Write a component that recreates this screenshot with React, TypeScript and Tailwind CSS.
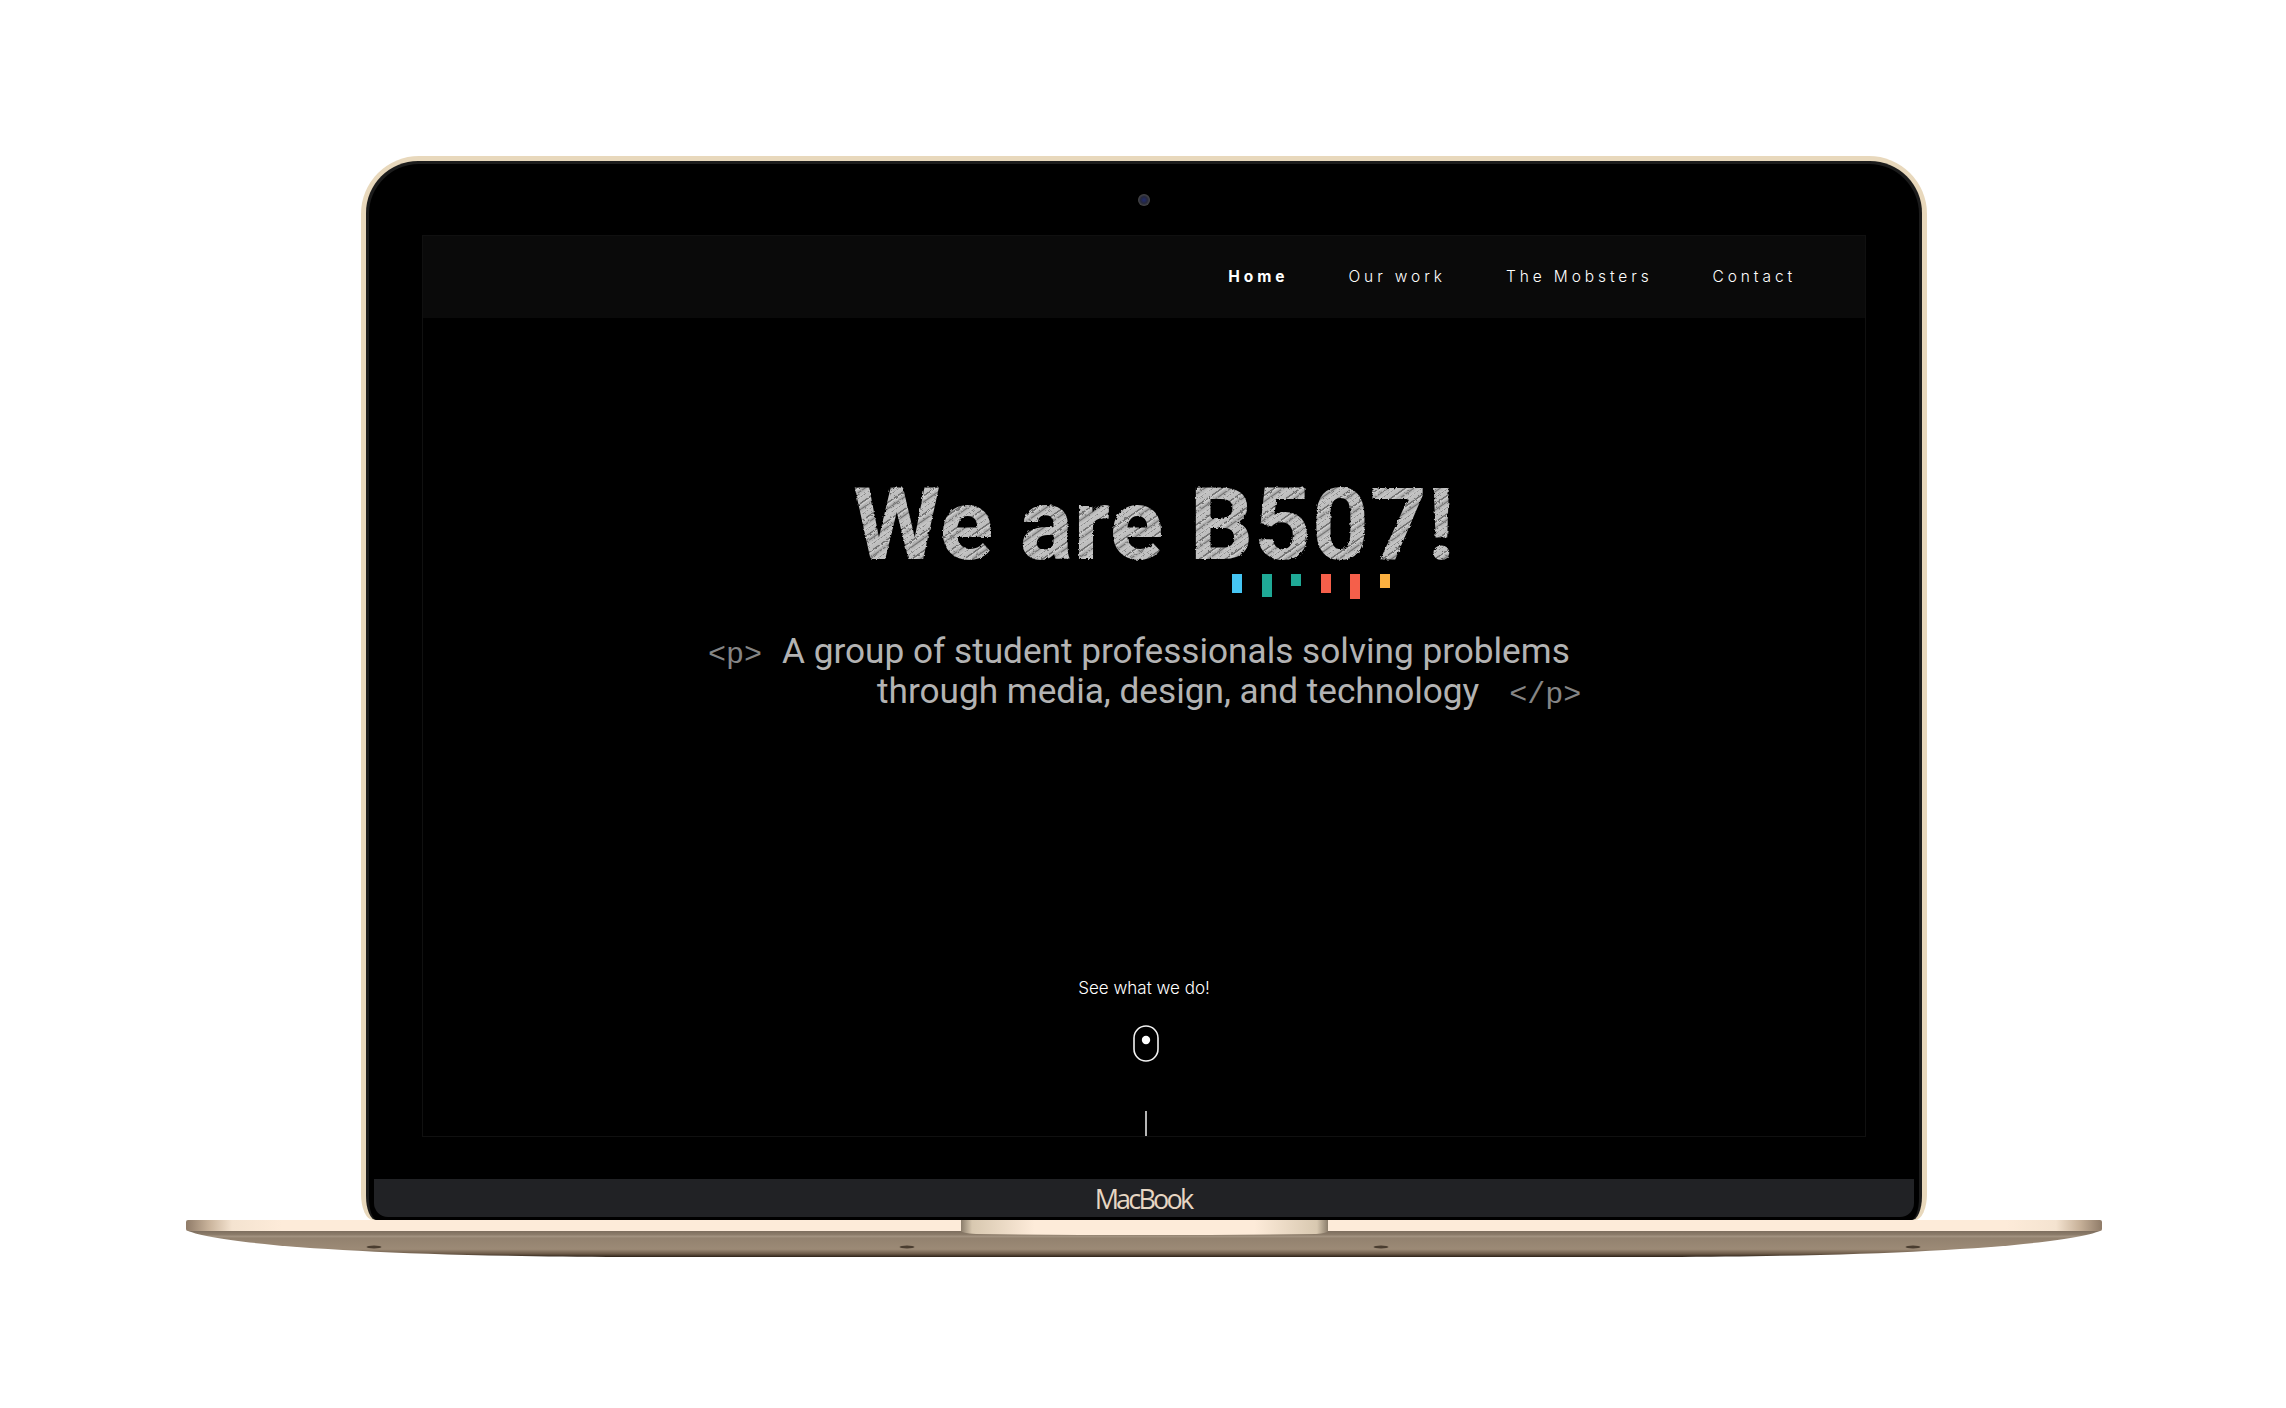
const navItems = [
  { label: 'Home', active: true },
  { label: 'Our work', active: false },
  { label: 'The Mobsters', active: false },
  { label: 'Contact', active: false },
];

const bars = [
  { h: 'h-[19px]', color: 'bg-[#45c5f3]' },
  { h: 'h-[23px]', color: 'bg-[#1fa996]' },
  { h: 'h-[12px]', color: 'bg-[#1fa996]' },
  { h: 'h-[19px]', color: 'bg-[#f55f4a]' },
  { h: 'h-[25px]', color: 'bg-[#f55f4a]' },
  { h: 'h-[14px]', color: 'bg-[#fbb040]' },
];

const ScrollMouse = () => (
  <svg width="26" height="37" viewBox="0 0 26 37" fill="none">
    <rect x="1" y="1" width="24" height="35" rx="12" stroke="#f2f2f2" strokeWidth="1.6" />
    <circle cx="13" cy="15" r="4.2" fill="#ffffff" />
  </svg>
);

// base of the laptop: front lip, notch, tapered body and rubber feet
const LaptopBase = () => (
  <svg width="1916" height="38" viewBox="0 0 1916 38" className="block ml-[186px]">
    <defs>
      {/* roughens the headline so it reads as scribbled */}
      <filter id="chalk" x="-2%" y="-5%" width="104%" height="110%">
        <feTurbulence type="fractalNoise" baseFrequency="0.35" numOctaves="2" seed="4" result="noise" />
        <feDisplacementMap in="SourceGraphic" in2="noise" scale="3" />
      </filter>
      <linearGradient id="lip" x1="0" x2="1" y1="0" y2="0">
        <stop offset="0" stopColor="#8f7b68" />
        <stop offset="0.012" stopColor="#c9b39b" />
        <stop offset="0.024" stopColor="#f4e3d0" />
        <stop offset="0.05" stopColor="#fdebd9" />
        <stop offset="0.95" stopColor="#fdebd9" />
        <stop offset="0.976" stopColor="#f4e3d0" />
        <stop offset="0.988" stopColor="#c9b39b" />
        <stop offset="1" stopColor="#8f7b68" />
      </linearGradient>
      <linearGradient id="body" x1="0" x2="0" y1="0" y2="1">
        <stop offset="0" stopColor="#7d6e5e" />
        <stop offset="0.15" stopColor="#8d7d6b" />
        <stop offset="0.2" stopColor="#a49482" />
        <stop offset="0.28" stopColor="#93826f" />
        <stop offset="0.7" stopColor="#9c8a76" />
        <stop offset="0.88" stopColor="#6b5947" />
        <stop offset="1" stopColor="#2c2117" />
      </linearGradient>
      <linearGradient id="notch" x1="0" x2="1" y1="0" y2="0">
        <stop offset="0" stopColor="#8b7d6b" />
        <stop offset="0.03" stopColor="#d8c8b0" />
        <stop offset="0.2" stopColor="#fdebd9" />
        <stop offset="0.8" stopColor="#fdebd9" />
        <stop offset="0.97" stopColor="#d8c8b0" />
        <stop offset="1" stopColor="#8b7d6b" />
      </linearGradient>
    </defs>
    <path d="M2 11 L1914 11 C1880 24 1740 36 1480 37 L436 37 C176 36 36 24 2 11 Z" fill="url(#body)" />
    <path d="M0 2 Q0 0 2 0 L1914 0 Q1916 0 1916 2 L1916 9 Q1916 11 1914 11 L2 11 Q0 11 0 9 Z" fill="url(#lip)" />
    <path d="M775 0 L1142 0 L1142 11 Q1142 13 1130 14 Q960 16 790 14 Q775 13 775 11 Z" fill="url(#notch)" />
    <ellipse cx="188" cy="27" rx="7.5" ry="1.4" fill="#4a3d30" />
    <ellipse cx="721" cy="27" rx="7.5" ry="1.4" fill="#4a3d30" />
    <ellipse cx="1195" cy="27" rx="7.5" ry="1.4" fill="#4a3d30" />
    <ellipse cx="1727" cy="27" rx="7.5" ry="1.4" fill="#4a3d30" />
  </svg>
);

export default function App() {
  return (
    <div className="w-full h-[1408px] bg-white pt-[156px] overflow-hidden font-['Roboto',sans-serif]">
      {/* Lid */}
      <div className="ml-[361px] w-[1566px] h-[1064px] bg-[#e8d8bc] px-[5px] pt-[5px] rounded-t-[58px] rounded-b-[12px_26px]">
        <div className="h-full bg-[#1c1c1c] px-[3px] pt-[3px] rounded-t-[52px] rounded-b-[10px_24px]">
          <div className="h-full bg-black rounded-t-[50px] rounded-b-[8px_22px] flex flex-col overflow-hidden">
            {/* Camera */}
            <div className="h-[71px] shrink-0 flex justify-center pt-[30px]">
              <div className="w-[12px] h-[12px] rounded-full bg-[radial-gradient(circle,#1f2a70_0%,#26283a_40%,#474747_70%,#1c1c1c_100%)]" />
            </div>
            {/* Screen */}
            <div className="mx-[53px] h-[902px] shrink-0 border border-[#101010] flex flex-col">
              <nav className="h-[82px] shrink-0 bg-[#0a0a0a] flex items-center justify-end pr-[69px] gap-[60px]">
                {navItems.map((item) => (
                  <a
                    key={item.label}
                    className={`text-[15.5px] tracking-[3.9px] text-white font-['Inter',sans-serif] ${
                      item.active ? 'font-bold' : 'font-light'
                    }`}
                  >
                    {item.label}
                  </a>
                ))}
              </nav>
              <main className="flex-1 flex flex-col items-center relative">
                <h1 className="mt-[148px] ml-[20px] h-[118px] leading-[118px] text-[100px] tracking-[0.5px] font-bold whitespace-nowrap font-['Roboto',sans-serif] [filter:url(#chalk)] bg-[repeating-linear-gradient(145deg,#c4c4c4_0px,#bcbcbc_4px,#6a6a6a_4.5px,#7c7c7c_5.5px,#d2d2d2_6px,#a8a8a8_9px,#707070_10px,#b4b4b4_11px,#cacaca_14px,#808080_15px)] bg-clip-text text-transparent">
                  We are B507!
                </h1>
                <div className="flex gap-[19.5px] items-start h-[25px] mt-[-10px] ml-[334px]">
                  {bars.map((bar, i) => (
                    <span key={i} className={`w-[10px] ${bar.h} ${bar.color}`} />
                  ))}
                </div>
                <div className="mt-[32px] ml-[8px] w-[880px] text-[#b3b3b3] text-[35.2px] leading-[40px] whitespace-nowrap">
                  <div className="flex items-baseline h-[40px]">
                    <span className="w-[74px] text-[#858585] text-[30px] leading-none font-['Liberation_Mono',monospace]">&lt;p&gt;</span>
                    <span>A group of student professionals solving problems</span>
                  </div>
                  <div className="flex items-baseline h-[40px] pl-[169px]">
                    <span>through media, design, and technology</span>
                    <span className="ml-[30px] text-[#858585] text-[30px] leading-none font-['Liberation_Mono',monospace]">&lt;/p&gt;</span>
                  </div>
                </div>
                <p className="mt-[267px] text-[17px] text-white font-['Inter',sans-serif] font-light leading-[20px]">See what we do!</p>
                <div className="mt-[27px] ml-[3px]">
                  <ScrollMouse />
                </div>
                <div className="mt-auto ml-[3px] w-[2px] h-[25px] bg-[#b5b5b5]" />
              </main>
            </div>
            <div className="flex-1" />
            {/* Keyboard edge */}
            <div className="h-[38px] shrink-0 mx-[5px] bg-[#212225] rounded-b-[14px] flex items-center justify-center">
              <span className="text-[27px] tracking-[-2.8px] text-[#e6d6c3] font-['Open_Sans',sans-serif] ml-[-2px] mt-[3px]">MacBook</span>
            </div>
            <div className="h-[3px] shrink-0" />
          </div>
        </div>
      </div>
      <LaptopBase />
    </div>
  );
}
